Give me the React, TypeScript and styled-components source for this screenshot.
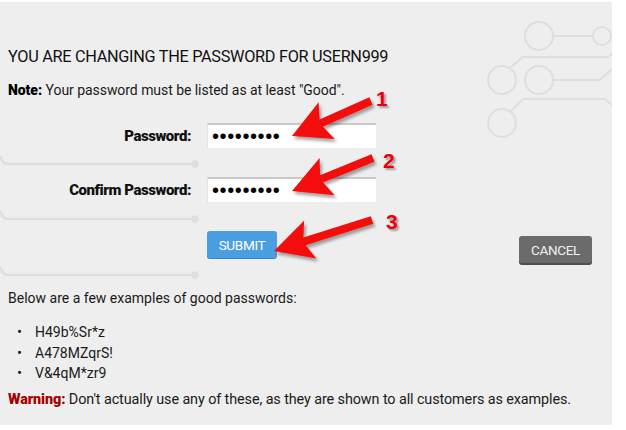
import React from "react";
import styled, { createGlobalStyle } from "styled-components";

const Global = createGlobalStyle`
  html, body { margin: 0; padding: 0; background: #ffffff; }
  body { font-family: Roboto, "Liberation Sans", Arial, sans-serif; color: #111; }
`;

const Panel = styled.div`
  position: relative;
  margin-top: 2px;
  width: 612px;
  height: 423px;
  background: #eeeeee;
  box-sizing: border-box;
  padding: 0 0 0 8px;
  overflow: hidden;
`;

const Decor = styled.svg`
  position: absolute;
  left: 0;
  top: 0;
  pointer-events: none;
`;

const Content = styled.div`
  position: relative;
  display: flex;
  flex-direction: column;
`;

const Title = styled.h1`
  margin: 46px 0 0;
  font-size: 16.3px;
  line-height: 18px;
  font-weight: 400;
  color: #111;
  letter-spacing: -0.3px;
`;

const Note = styled.p`
  margin: 15px 0 0;
  font-size: 14px;
  line-height: 18px;
  color: #1a1a1a;
  letter-spacing: -0.05px;
  b { font-weight: 900; color: #000; }
`;

const Form = styled.div`
  display: grid;
  grid-template-columns: 183px 169px;
  column-gap: 16px;
  row-gap: 29px;
  align-items: center;
  margin-top: 24px;
`;

const Label = styled.label`
  text-align: right;
  font-size: 15px;
  font-weight: 900;
  color: #111;
  letter-spacing: -0.45px;
`;

const Field = styled.input`
  box-sizing: border-box;
  width: 169px;
  height: 25px;
  border: none;
  border-top: 2px solid #c9c9c9;
  border-left: 1px solid #e2e2e2;
  background: #fff;
  padding: 0 4px;
  font-family: "Liberation Sans", Arial, sans-serif;
  font-size: 20px;
  letter-spacing: 0.6px;
  color: #000;
  outline: none;
`;

const Actions = styled.div`
  display: flex;
  align-items: flex-start;
  margin-top: 29px;
  padding-left: 199px;
  width: 584px;
  box-sizing: border-box;
`;

const Button = styled.button<{ $tone: "primary" | "muted" }>`
  box-sizing: border-box;
  height: 27px;
  border: none;
  border-radius: 3px;
  font-family: Roboto, "Liberation Sans", sans-serif;
  font-size: 13.5px;
  letter-spacing: -0.3px;
  padding: 0;
  cursor: pointer;
  background: ${(p) => (p.$tone === "primary" ? "#4a9fe0" : "#6b6b6b")};
  color: ${(p) => (p.$tone === "primary" ? "#ffffff" : "#f0f0f0")};
  box-shadow: ${(p) =>
    p.$tone === "primary" ? "0 1px 0 #3a86c4" : "0 2px 0 #4e4e4e"};
  width: ${(p) => (p.$tone === "primary" ? "70px" : "73px")};
  margin-top: ${(p) => (p.$tone === "primary" ? "0" : "5px")};
  margin-left: ${(p) => (p.$tone === "primary" ? "0" : "auto")};
`;

const Para = styled.p`
  margin: 26px 0 0;
  font-size: 14px;
  line-height: 18px;
  color: #1a1a1a;
`;

const List = styled.ul`
  list-style: none;
  margin: 16px 0 0;
  padding: 0;
  display: flex;
  flex-direction: column;
  gap: 2.5px;
`;

const Item = styled.li`
  display: flex;
  align-items: center;
  font-size: 14px;
  line-height: 18px;
  color: #1a1a1a;
  &::before {
    content: "•";
    width: 27px;
    padding-left: 9px;
    box-sizing: border-box;
    font-size: 15px;
  }
`;

const Warning = styled.p`
  margin: 9px 0 0;
  font-size: 14.4px;
  line-height: 18px;
  color: #1a1a1a;
  letter-spacing: -0.1px;
  b { font-weight: 900; color: #a80000; }
`;

const Annot = styled.svg`
  position: absolute;
  left: 0;
  top: 0;
  pointer-events: none;
  overflow: visible;
`;

const Num = styled.span<{ $x: number; $y: number }>`
  position: absolute;
  left: ${(p) => p.$x}px;
  top: ${(p) => p.$y}px;
  font-family: "Liberation Sans", Arial, sans-serif;
  font-weight: 700;
  font-size: 21px;
  line-height: 21px;
  color: #e8000b;
  text-shadow: 2px 2px 2px rgba(0, 0, 0, 0.35);
`;

type P = [number, number];
function arrow(tail: P, tip: P, headLen = 38, headHalf = 20, shaftHalf = 4): string {
  const dx = tip[0] - tail[0];
  const dy = tip[1] - tail[1];
  const len = Math.hypot(dx, dy);
  const ux = dx / len, uy = dy / len;
  const nx = -uy, ny = ux;
  const bx = tip[0] - ux * (headLen - 6), by = tip[1] - uy * (headLen - 6);
  const cx = tip[0] - ux * headLen, cy = tip[1] - uy * headLen;
  const pts: P[] = [
    [tail[0] + nx * shaftHalf, tail[1] + ny * shaftHalf],
    [bx + nx * shaftHalf, by + ny * shaftHalf],
    [cx + nx * headHalf, cy + ny * headHalf],
    tip,
    [cx - nx * headHalf, cy - ny * headHalf],
    [bx - nx * shaftHalf, by - ny * shaftHalf],
    [tail[0] - nx * shaftHalf, tail[1] - ny * shaftHalf],
  ];
  return pts.map((p) => `${p[0].toFixed(1)},${p[1].toFixed(1)}`).join(" ");
}

const arrows: { tail: P; tip: P }[] = [
  { tail: [371, 99], tip: [292, 134] },
  { tail: [373, 156], tip: [292, 189] },
  { tail: [372, 218], tip: [274, 249] },
];

function Circuit() {
  const c = "#dedede";
  return (
    <Decor width="612" height="423" viewBox="0 0 612 423">
      <g fill="none" stroke={c} strokeWidth="2.5" strokeLinecap="round">
        {[162, 217, 273].map((y) => (
          <g key={y}>
            <path d={`M1 ${y - 7} Q2 ${y} 9 ${y} L193 ${y}`} />
            <circle cx="195" cy={y} r="2.5" fill={c} />
          </g>
        ))}
      </g>
      <g fill="none" stroke={c} strokeWidth="2">
        <circle cx="539" cy="34" r="14" />
        <circle cx="602" cy="34" r="9" />
        <path d="M553 34 L593 34" />
        <path d="M510 66 L523 55 L608 55 L612 52" />
        <circle cx="502" cy="78" r="14" />
        <circle cx="539" cy="78" r="14" />
        <path d="M553 78 L600 78 L612 67" />
        <path d="M510 110 L523 97 L605 97 L612 103" />
        <circle cx="502" cy="121" r="14" />
      </g>
    </Decor>
  );
}

function Annotations() {
  return (
    <>
      <Annot width="612" height="423">
        <defs>
          <filter id="sh" x="-20%" y="-20%" width="150%" height="160%">
            <feDropShadow dx="2" dy="3" stdDeviation="1.8" floodColor="#000" floodOpacity="0.35" />
          </filter>
        </defs>
        {arrows.map((a, i) => (
          <polygon key={i} points={arrow(a.tail, a.tip)} fill="#f30a0a" filter="url(#sh)" />
        ))}
      </Annot>
      <Num $x={376} $y={86}>1</Num>
      <Num $x={383} $y={148}>2</Num>
      <Num $x={386} $y={209}>3</Num>
    </>
  );
}

export default function App() {
  return (
    <>
      <Global />
      <Panel>
        <Circuit />
        <Content>
          <Title>YOU ARE CHANGING THE PASSWORD FOR USERN999</Title>
          <Note>
            <b>Note:</b> Your password must be listed as at least "Good".
          </Note>
          <Form>
            <Label htmlFor="pw">Password:</Label>
            <Field id="pw" type="password" readOnly defaultValue="123456789" />
            <Label htmlFor="pw2">Confirm Password:</Label>
            <Field id="pw2" type="password" readOnly defaultValue="123456789" />
          </Form>
          <Actions>
            <Button $tone="primary">SUBMIT</Button>
            <Button $tone="muted">CANCEL</Button>
          </Actions>
          <Para>Below are a few examples of good passwords:</Para>
          <List>
            <Item>H49b%Sr*z</Item>
            <Item>A478MZqrS!</Item>
            <Item>V&amp;4qM*zr9</Item>
          </List>
          <Warning>
            <b>Warning:</b> Don't actually use any of these, as they are shown to all customers as examples.
          </Warning>
        </Content>
        <Annotations />
      </Panel>
    </>
  );
}
